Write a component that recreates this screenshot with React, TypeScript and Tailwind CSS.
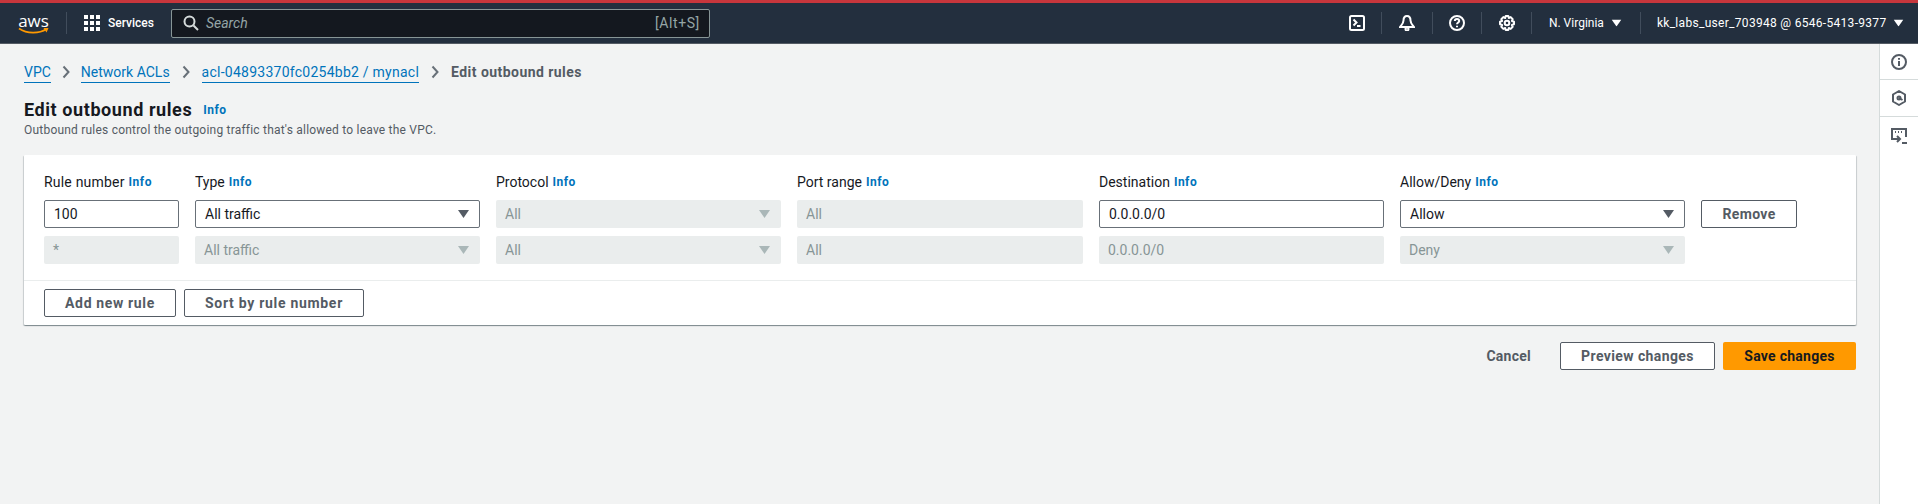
const F = "font-['Roboto','Liberation_Sans',sans-serif]";

function Caret({ className }: { className: string }) {
  return (
    <svg width="11" height="8" viewBox="0 0 11 8" className={className}>
      <path d="M0 0H11L5.5 8Z" fill="currentColor" />
    </svg>
  );
}

function Chevron() {
  return (
    <svg width="8" height="14" viewBox="0 0 8 14" className="text-[#687078]">
      <path d="M1.5 1.5L6.5 7L1.5 12.5" fill="none" stroke="currentColor" strokeWidth="2" />
    </svg>
  );
}

function Info() {
  return <span className="ml-[4px] text-[12px] font-bold tracking-[0.5px] text-[#0073bb]">Info</span>;
}

function Field({ label, width, labelClass, children }: { label: string; width: string; labelClass?: string; children: React.ReactNode }) {
  return (
    <div className={`flex flex-col ${width}`}>
      <div className="mb-[8px] flex h-[20px] items-center text-[14px] leading-[20px] text-[#16191f]">
        <span className={labelClass}>{label}</span>
        <Info />
      </div>
      {children}
    </div>
  );
}

function Box({ value, disabled, select }: { value: string; disabled?: boolean; select?: boolean }) {
  return (
    <div
      className={
        disabled
          ? "flex h-[28px] items-center justify-between rounded-[2px] bg-[#eaeded] pl-[9px] pr-[11px] text-[14px] text-[#879596]"
          : "flex h-[28px] items-center justify-between rounded-[2px] border border-[#687078] bg-white pl-[9px] pr-[10px] text-[14px] text-[#16191f]"
      }
    >
      <span>{value}</span>
      {select && <Caret className={disabled ? "text-[#aab7b8]" : "text-[#545b64]"} />}
    </div>
  );
}

function Button({ children, width, tracking }: { children: React.ReactNode; width: string; tracking: string }) {
  return (
    <div className={`flex h-[28px] items-center justify-center rounded-[2px] border border-[#545b64] bg-white text-[14px] font-bold text-[#545b64] ${tracking} ${width}`}>
      {children}
    </div>
  );
}

function Sep() {
  return <div className="h-[22px] w-px bg-[#414d5c]" />;
}

const navIcon = { fill: "none", stroke: "white", strokeWidth: 2 } as const;

export default function App() {
  return (
    <div className={`flex h-[504px] w-[1918px] flex-col overflow-hidden bg-[#f2f3f3] ${F}`}>
      <div className="h-[3px] bg-[#c7363c]" />
      <header className="flex h-[41px] items-center border-b border-[#545b64] bg-[#232f3e] text-white">
        <div className="relative ml-[18px] flex h-[20px] w-[31px] flex-col items-center">
          <span className="font-['Open_Sans',sans-serif] text-[17px] leading-[16px] text-white">aws</span>
          <svg width="31" height="8" viewBox="0 0 31 8" className="absolute left-0 top-[14px]">
            <path d="M1 1.5C9 7 21 7 28.5 2" fill="none" stroke="#ff9900" strokeWidth="1.7" />
            <path d="M25.5 1L30.5 1L28.5 5.5Z" fill="#ff9900" />
          </svg>
        </div>
        <div className="ml-[17px] h-[22px] w-px bg-[#414d5c]" />
        <svg width="16" height="16" viewBox="0 0 16 16" className="ml-[17px]" fill="white">
          {[0, 6, 12].map((y) => [0, 6, 12].map((x) => <rect key={`${x}-${y}`} x={x} y={y} width="4" height="4" />))}
        </svg>
        <span className="ml-[8px] text-[12px] font-medium">Services</span>
        <div className="ml-[17px] flex h-[29px] w-[539px] items-center rounded-[2px] border border-[#879596] bg-[#14181f] pl-[11px] pr-[9px]">
          <svg width="16" height="16" viewBox="0 0 16 16" fill="none" stroke="#d5dbdb" strokeWidth="2">
            <circle cx="6.5" cy="6.5" r="5" />
            <path d="M10.5 10.5L15 15" />
          </svg>
          <span className="ml-[7px] text-[14px] italic text-[#95a5a6]">Search</span>
          <span className="ml-auto text-[14px] tracking-[0.6px] text-[#95a5a6]">[Alt+S]</span>
        </div>
        <div className="ml-[639px] flex items-center">
          <svg width="16" height="16" viewBox="0 0 16 16" {...navIcon}>
            <rect x="1" y="1" width="14" height="14" rx="1.5" />
            <path d="M4.5 4.5L7.5 7.5L4.5 10.5M8 11H11.5" />
          </svg>
          <div className="ml-[16px]"><Sep /></div>
          <svg width="16" height="16" viewBox="0 0 16 16" className="ml-[17px]" {...navIcon}>
            <path d="M8 1C5.5 1 4.5 3 4.5 5.5C4.5 8.5 2 10.5 1 12H15C14 10.5 11.5 8.5 11.5 5.5C11.5 3 10.5 1 8 1Z" />
            <circle cx="8" cy="14" r="1.5" />
          </svg>
          <div className="ml-[17px]"><Sep /></div>
          <svg width="16" height="16" viewBox="0 0 16 16" className="ml-[16px]" {...navIcon}>
            <circle cx="8" cy="8" r="7" />
            <path d="M5.8 6C5.8 4.7 6.8 4 8 4C9.3 4 10.2 4.8 10.2 5.9C10.2 7.4 8 7.5 8 9.3" />
            <path d="M8 10.7V12.2" />
          </svg>
          <div className="ml-[16px]"><Sep /></div>
          <svg width="16" height="16" viewBox="0 0 16 16" className="ml-[17px]" {...navIcon}>
            <path d="M6.7 1H9.3L9.8 3L11.7 2.1L13.7 4.1L12.9 6L15 6.7V9.3L12.9 10L13.7 11.9L11.7 13.9L9.8 13L9.3 15H6.7L6.2 13L4.3 13.9L2.3 11.9L3.1 10L1 9.3V6.7L3.1 6L2.3 4.1L4.3 2.1L6.2 3Z" strokeLinejoin="round" />
            <circle cx="8" cy="8" r="2.3" />
          </svg>
          <div className="ml-[16px]"><Sep /></div>
          <span className="ml-[17px] text-[12px]">N. Virginia</span>
          <Caret className="ml-[7px] scale-90 text-white" />
          <div className="ml-[18px]"><Sep /></div>
          <span className="ml-[16px] text-[12px] tracking-[0.3px]">kk_labs_user_703948 @ 6546-5413-9377</span>
          <Caret className="ml-[7px] scale-90 text-white" />
        </div>
      </header>
      <div className="flex min-h-0 flex-1">
        <main className="w-[1879px] pl-[24px] pr-[23px]">
          <nav className="mt-[18px] flex h-[20px] items-center text-[14px] leading-[20px]">
            <span className="border-b border-[#0073bb] text-[#0073bb]">VPC</span>
            <span className="mx-[11px] flex"><Chevron /></span>
            <span className="border-b border-[#0073bb] text-[#0073bb]">Network ACLs</span>
            <span className="mx-[12px] flex"><Chevron /></span>
            <span className="border-b border-[#0073bb] tracking-[0.25px] text-[#0073bb]">acl-04893370fc0254bb2 / mynacl</span>
            <span className="mx-[12px] flex"><Chevron /></span>
            <span className="font-bold tracking-[0.45px] text-[#545b64]">Edit outbound rules</span>
          </nav>
          <div className="mt-[16px] flex h-[24px] items-center">
            <h1 className="text-[18px] font-bold leading-[24px] tracking-[0.58px] text-[#16191f]">Edit outbound rules</h1>
            <span className="ml-[11px] text-[12px] font-bold tracking-[0.5px] text-[#0073bb]">Info</span>
          </div>
          <p className="text-[12px] leading-[16px] tracking-[0.21px] text-[#545b64]">Outbound rules control the outgoing traffic that's allowed to leave the VPC.</p>

          <section className="mt-[17px] h-[170px] rounded-[1px] bg-white shadow-[0_1px_1px_0_rgba(0,28,36,0.3),1px_1px_1px_0_rgba(0,28,36,0.15),-1px_1px_1px_0_rgba(0,28,36,0.15)]">
            <div className="flex gap-[16px] pl-[20px] pt-[17px]">
              <Field label="Rule number" width="w-[135px]" labelClass="tracking-[0.2px]">
                <Box value="100" />
                <div className="h-[8px]" />
                <Box value="*" disabled />
              </Field>
              <Field label="Type" width="w-[285px]">
                <Box value="All traffic" select />
                <div className="h-[8px]" />
                <Box value="All traffic" select disabled />
              </Field>
              <Field label="Protocol" width="w-[285px]">
                <Box value="All" select disabled />
                <div className="h-[8px]" />
                <Box value="All" select disabled />
              </Field>
              <Field label="Port range" width="w-[286px]">
                <Box value="All" disabled />
                <div className="h-[8px]" />
                <Box value="All" disabled />
              </Field>
              <Field label="Destination" width="w-[285px]">
                <Box value="0.0.0.0/0" />
                <div className="h-[8px]" />
                <Box value="0.0.0.0/0" disabled />
              </Field>
              <Field label="Allow/Deny" width="w-[285px]">
                <Box value="Allow" select />
                <div className="h-[8px]" />
                <Box value="Deny" select disabled />
              </Field>
              <div className="pt-[28px]">
                <Button width="w-[96px]" tracking="tracking-[0.35px]">Remove</Button>
              </div>
            </div>
            <div className="mt-[16px] flex gap-[8px] border-t border-[#eaeded] pl-[20px] pt-[8px]">
              <Button width="w-[132px]" tracking="tracking-[0.65px]">Add new rule</Button>
              <Button width="w-[180px]" tracking="tracking-[0.7px]">Sort by rule number</Button>
            </div>
          </section>

          <div className="mt-[17px] flex items-center justify-end">
            <span className="mr-[29px] text-[14px] font-bold tracking-[0.25px] text-[#545b64]">Cancel</span>
            <Button width="w-[155px]" tracking="tracking-[0.4px]">Preview changes</Button>
            <div className="ml-[8px] flex h-[28px] w-[133px] items-center justify-center rounded-[2px] bg-[#ff9900] text-[14px] font-bold tracking-[0.25px] text-[#16191f]">
              Save changes
            </div>
          </div>
        </main>
        <aside className="flex w-[39px] flex-col border-l border-[#d5dbdb] bg-white text-[#545b64]">
          <div className="flex h-[36px] items-center justify-center border-b border-[#d5dbdb]">
            <svg width="16" height="16" viewBox="0 0 16 16" fill="none" stroke="currentColor" strokeWidth="2">
              <circle cx="8" cy="8" r="7" />
              <path d="M8 7V12M8 4V5.8" />
            </svg>
          </div>
          <div className="flex h-[37px] items-center justify-center border-b border-[#d5dbdb]">
            <svg width="16" height="16" viewBox="0 0 16 16" fill="none" stroke="currentColor" strokeWidth="2">
              <path d="M8 1L14 4.5V11.5L8 15L2 11.5V4.5Z" strokeLinejoin="round" />
              <circle cx="8" cy="8" r="1.5" />
              <path d="M8 8L11.5 10" />
            </svg>
          </div>
          <div className="flex h-[37px] items-center justify-center">
            <svg width="16" height="16" viewBox="0 0 16 16" fill="none" stroke="currentColor" strokeWidth="2">
              <path d="M5 11H1V1H15V9" />
              <path d="M4 4H5M7 4H8M10 4H11" />
              <path d="M6 8L9 11L6 14M3 11H9M11 15H16" />
            </svg>
          </div>
        </aside>
      </div>
    </div>
  );
}
